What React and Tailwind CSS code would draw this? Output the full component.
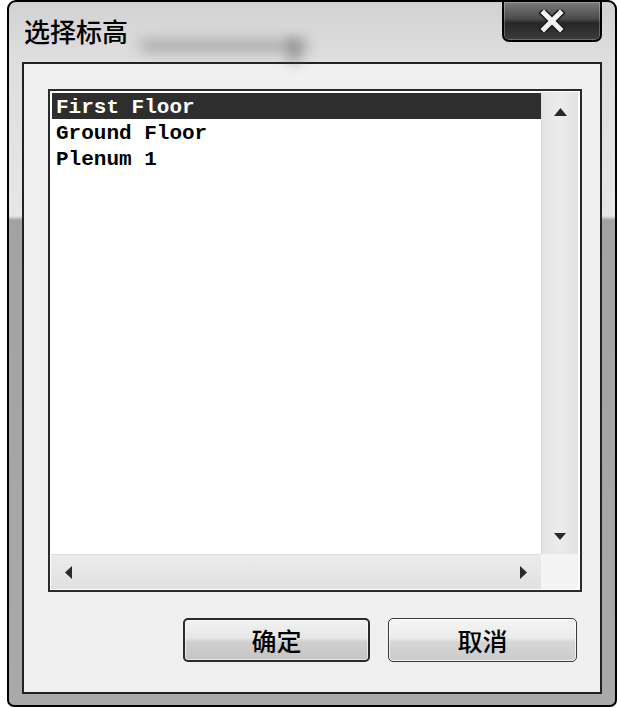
import React from "react";

const floors = ["First Floor", "Ground Floor", "Plenum 1"];

const cjk = "font-['Noto_Sans_CJK_SC','Noto_Sans',sans-serif]";

function Arrow({ dir }) {
  const pts = {
    up: "0,8 6.5,0 13,8",
    down: "0,0 12,0 6,7",
    left: "7,0 7,13 0,6.5",
    right: "0,0 0,13 7,6.5",
  }[dir];
  const size = dir === "up" ? [13, 8] : dir === "down" ? [12, 7] : [7, 13];
  return (
    <svg width={size[0]} height={size[1]} viewBox={`0 0 ${size[0]} ${size[1]}`}>
      <polygon points={pts} fill="#2a2a2a" />
    </svg>
  );
}

export default function App() {
  return (
    <div className="w-[617px] h-[708px] bg-white pl-[7px] overflow-hidden">
      {/* Window frame */}
      <div className="relative w-[610px] h-[707px] border-2 border-black rounded-t-[9px] rounded-b-[7px] flex flex-col px-[13px] pb-[11px] bg-[linear-gradient(to_bottom,#d2d2d2_0px,#dedede_60px,#e6e6e6_214px,#a2a2a2_218px,#a9a9a9_100%)]">
        {/* glass blur in the title bar */}
        <div className="absolute left-[130px] top-[38px] w-[170px] h-[12px] bg-[#6a6a6a] opacity-45 blur-[7px] rounded-full" />
        <div className="absolute left-[278px] top-[36px] w-[14px] h-[26px] bg-[#5a5a5a] opacity-35 blur-[6px]" />

        {/* Title bar */}
        <div className="relative h-[60px] flex items-start justify-between">
          <div className={`${cjk} font-medium text-[26px] leading-none text-black pl-[2px] mt-[16px]`}>选择标高</div>
          <button className="-mt-[2px] w-[100px] h-[42px] rounded-b-[7px] border-2 border-black flex items-center justify-center bg-[linear-gradient(to_bottom,#7a7a7a_0%,#4a4a4a_45%,#262626_55%,#3c3c3c_100%)] shadow-[inset_0_0_0_1px_rgba(255,255,255,0.25)]">
            <svg width="26" height="22" viewBox="0 0 26 22">
              <path d="M5 3 L21 19 M21 3 L5 19" stroke="#1a1a1a" strokeWidth="8" strokeLinecap="square" />
              <path d="M5 3 L21 19 M21 3 L5 19" stroke="#f4f4f4" strokeWidth="5" strokeLinecap="square" />
            </svg>
          </button>
        </div>

        {/* Client area */}
        <div className="flex-1 border-2 border-[#222] bg-[#f0f0f0] flex flex-col">
          {/* List box */}
          <div className="ml-[24px] mr-[18px] mt-[25px] h-[503px] border-2 border-[#2a2a2a] bg-white p-px grid grid-cols-[490px_37px] grid-rows-[462px_35px]">
            <div className="pl-px pt-px font-['Liberation_Mono',monospace] font-bold text-[21px] text-black">
              {floors.map((f, i) => (
                <div key={f} className={`h-[26px] leading-[29px] pl-[4px] whitespace-pre ${i === 0 ? "bg-[#2e2e2e] text-white" : ""}`}>
                  {f}
                </div>
              ))}
            </div>
            <div className="bg-[linear-gradient(to_right,#e4e4e4,#ececec_50%,#e2e2e2)] border-l border-[#dcdcdc] flex flex-col items-center justify-between pt-[16px] pb-[14px]">
              <Arrow dir="up" />
              <Arrow dir="down" />
            </div>
            <div className="bg-[linear-gradient(to_bottom,#ececec,#e6e6e6_50%,#e0e0e0)] border-t border-[#dcdcdc] flex items-center justify-between pl-[14px] pr-[14px]">
              <Arrow dir="left" />
              <Arrow dir="right" />
            </div>
            <div className="bg-[#f4f4f4]" />
          </div>

          {/* Buttons */}
          <div className={`${cjk} font-medium flex justify-end gap-[18px] pr-[23px] mt-[26px]`}>
            <button className="w-[187px] h-[44px] rounded-[5px] border-2 border-[#2a2a2a] text-[25px] leading-none text-black bg-[linear-gradient(to_bottom,#f2f2f2_0%,#e6e6e6_45%,#cfcfcf_55%,#c4c4c4_100%)] shadow-[inset_0_0_0_1px_rgba(255,255,255,0.6)]">
              确定
            </button>
            <button className="w-[189px] h-[44px] rounded-[5px] border-[1.5px] border-[#3a3a3a] text-[25px] leading-none text-black bg-[linear-gradient(to_bottom,#f4f4f4_0%,#ebebeb_45%,#d6d6d6_55%,#cbcbcb_100%)] shadow-[inset_0_0_0_1px_rgba(255,255,255,0.7)]">
              取消
            </button>
          </div>
        </div>
      </div>
    </div>
  );
}
